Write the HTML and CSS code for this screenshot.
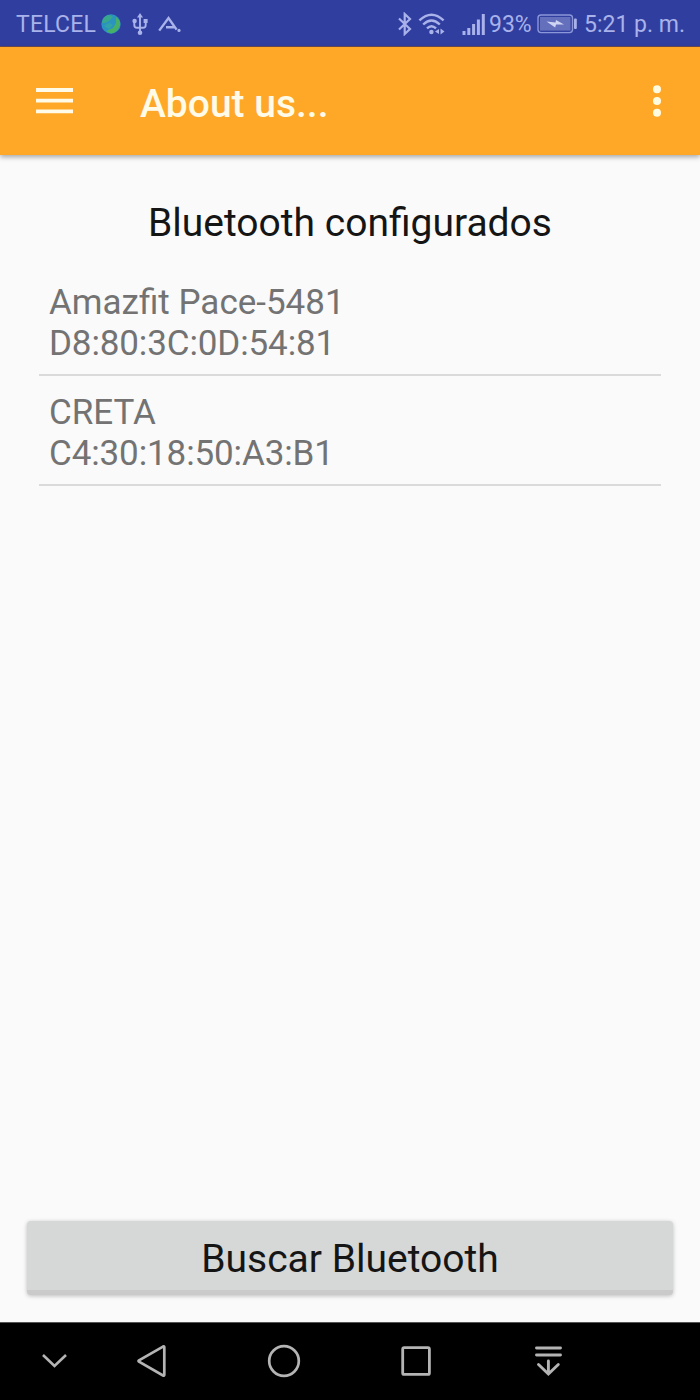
FILE: index.html
```html
<!DOCTYPE html>
<html lang="es">
<head>
    <meta charset="UTF-8">
    <title>Bluetooth configurados</title>
    <link rel="stylesheet" href="styles.css">
</head>
<body>
    <div class="screen">
        <div class="status-bar">
            <div class="status-left">
                <span class="carrier">TELCEL</span>
                <svg class="icon-globe" width="20" height="20" viewBox="0 0 20 20">
                    <circle cx="10" cy="10" r="9.7" fill="#2b93c0"/>
                    <path d="M1 9 Q2 1 9 1 L12 3 L8 7 L4 9 Z" fill="#38a88c"/>
                    <path d="M15 3 Q20 7 19 11 Q17 18 10 19.5 L5 17 L12 14 L15 9 Z" fill="#46b166"/>
                    <path d="M3 12 L8 9 L12 11 L8 15 Z" fill="#31a4a8"/>
                </svg>
                <svg class="icon-usb" width="16" height="24" viewBox="0 0 16 24">
                    <path d="M8 4V20M2.3 9V13Q2.3 15.8 5 15.8H11Q13.7 15.8 13.7 13V9" fill="none" stroke="#a9b2ea" stroke-width="1.9"/>
                    <path d="M5 5.5L8 1L11 5.5Z" fill="#a9b2ea"/>
                    <circle cx="8" cy="20.7" r="2.3" fill="#a9b2ea"/>
                    <circle cx="2.6" cy="9" r="2.2" fill="#a9b2ea"/>
                    <rect x="11.6" y="7" width="4" height="4" fill="#a9b2ea"/>
                </svg>
                <svg class="icon-app" width="24" height="20" viewBox="0 0 24 20">
                    <path d="M1.2 15.6L10.5 3L18.6 14.6M8 12.3H17" fill="none" stroke="#a9b2ea" stroke-width="2.4"/>
                    <circle cx="21" cy="15.4" r="1.6" fill="#a9b2ea"/>
                </svg>
            </div>
            <div class="status-right">
                <svg class="icon-bt" width="16" height="24" viewBox="0 0 16 24">
                    <path d="M2 6.5L13 17L7.7 22V2L13 7L2 17.5" fill="none" stroke="#a9b2ea" stroke-width="2.2"/>
                </svg>
                <svg class="icon-wifi" width="29" height="24" viewBox="0 0 29 24">
                    <path d="M1.4 8.3Q13.5 -3 25.6 8.3M5.2 12.5Q13.5 4.5 21.8 12.5M9 16.4Q13.5 12 18 16.4" fill="none" stroke="#a9b2ea" stroke-width="2.4"/>
                    <circle cx="13.4" cy="20" r="2.2" fill="#a9b2ea"/>
                    <path d="M17 19.5L21 17V22ZM26.5 19.5L22.5 16.5V22.5Z" fill="#a9b2ea"/>
                </svg>
                <svg class="icon-signal" width="24" height="24" viewBox="0 0 24 24">
                    <path d="M2 19V23M6.8 16V23M11.6 12V23M16.4 7.5V23M21.3 2V23" fill="none" stroke="#a9b2ea" stroke-width="3"/>
                </svg>
                <span class="percent">93%</span>
                <svg class="icon-battery" width="41" height="20" viewBox="0 0 41 20">
                    <rect x="1" y="1" width="34.5" height="17.6" rx="3" fill="none" stroke="#8c97d9" stroke-width="1.4"/>
                    <rect x="3" y="3" width="30.5" height="13.6" fill="#6470bc"/>
                    <path d="M9.5 7.5L18.5 8.6L19 6L27 10.6L19 10.6L18.2 13.5Z" fill="#d1d5f4"/>
                    <rect x="37" y="4.5" width="2.8" height="10.5" rx="1" fill="#a9b2ea"/>
                </svg>
                <span class="clock">5:21 p. m.</span>
            </div>
        </div>

        <div class="app-bar">
            <svg class="icon-menu" width="38" height="28" viewBox="0 0 38 28">
                <path d="M0 3H37M0 13.7H37M0 24.4H37" stroke="#fffbe8" stroke-width="3.8"/>
            </svg>
            <span class="app-title">About us...</span>
            <svg class="icon-more" width="10" height="34" viewBox="0 0 10 34">
                <circle cx="5" cy="5.2" r="4" fill="#fffbe0"/>
                <circle cx="5" cy="17" r="4" fill="#fffbe0"/>
                <circle cx="5" cy="28.7" r="4" fill="#fffbe0"/>
            </svg>
        </div>

        <div class="content">
            <h1>Bluetooth configurados</h1>
            <ul class="devices">
                <li><span>Amazfit Pace-5481</span><span class="address">D8:80:3C:0D:54:81</span></li>
                <li><span>CRETA</span><span class="address">C4:30:18:50:A3:B1</span></li>
            </ul>
            <button class="search">Buscar Bluetooth</button>
        </div>

        <div class="nav-bar">
            <svg width="132" height="40" viewBox="0 0 132 40">
                <path d="M43 15L54.5 26L66 15" fill="none" stroke="#b4b4b4" stroke-width="2.6"/>
            </svg>
            <svg width="80" height="40" viewBox="0 0 80 40">
                <path d="M7 20.3Q6 21 7 21.7L31 35.5Q32.3 36 32.3 34.8V7.3Q32.3 6 31 6.6Z" fill="none" stroke="#b4b4b4" stroke-width="2.7"/>
            </svg>
            <svg width="144" height="40" viewBox="0 0 144 40">
                <circle cx="72" cy="21" r="14.8" fill="none" stroke="#b4b4b4" stroke-width="2.7"/>
            </svg>
            <svg width="120" height="40" viewBox="0 0 120 40">
                <rect x="46.7" y="7.7" width="26.7" height="26.7" rx="1.5" fill="none" stroke="#b4b4b4" stroke-width="2.8"/>
            </svg>
            <svg width="144" height="40" viewBox="0 0 144 40">
                <path d="M60.5 8H84.5M60.5 15H84.5M72.4 21V34M62.5 24.5L72.4 34L82.3 24.5" fill="none" stroke="#b4b4b4" stroke-width="2.9" stroke-linecap="round"/>
            </svg>
        </div>
    </div>
</body>
</html>
```
FILE: styles.css
```css
* {
    box-sizing: border-box;
}
body {
    margin: 0;
    font-family: Roboto, sans-serif;
    background-color: #fafafa;
}
svg {
    display: block;
    flex-shrink: 0;
}
.screen {
    display: flex;
    flex-direction: column;
    width: 700px;
    height: 1400px;
    overflow: hidden;
}
.status-bar {
    display: flex;
    justify-content: space-between;
    height: 47px;
    padding: 0 15px 0 16px;
    background-color: #303f9f;
    border-bottom: 1px solid #6b4a55;
    color: #a9b2ea;
    font-size: 23px;
    line-height: 44px;
    white-space: nowrap;
}
.status-left, .status-right {
    display: flex;
    align-items: center;
}
.carrier, .percent, .clock {
    padding-top: 4px;
}
.carrier {
    width: 85px;
    letter-spacing: 0.2px;
}
.icon-globe {
    margin-top: 2px;
}
.icon-usb {
    margin: 2px 0 0 11px;
}
.icon-app {
    margin: 3px 0 0 10px;
}
.icon-bt {
    margin-top: 1px;
}
.icon-wifi {
    margin: 1px 0 0 5px;
}
.icon-signal {
    margin: 1px 0 0 15px;
}
.percent {
    width: 43px;
    margin-left: 3px;
}
.icon-battery {
    margin: 1px 0 0 5px;
}
.clock {
    width: 101px;
    margin-left: 6px;
}
.app-bar {
    display: flex;
    align-items: center;
    height: 108px;
    padding: 0 38px 0 36px;
    background-color: #ffa827;
    box-shadow: 0 2px 5px rgba(0,0,0,0.35);
    color: #fffbe8;
}
.icon-menu {
    margin-bottom: 1px;
}
.app-title {
    flex: 1;
    margin: 6px 0 0 66px;
    font-size: 39px;
    font-weight: 500;
}
.content {
    display: flex;
    flex: 1;
    flex-direction: column;
    padding: 45px 27px 27px;
}
h1 {
    margin: 0;
    color: #151515;
    font-size: 39px;
    font-weight: 400;
    line-height: 46px;
    text-align: center;
}
.devices {
    margin: 20px 12px 0;
    padding: 0;
    list-style: none;
}
.devices li {
    height: 110px;
    padding: 16px 10px 0;
    border-bottom: 2px solid #dadada;
    color: #737373;
    font-size: 35px;
    line-height: 41px;
}
.devices span {
    display: block;
}
.devices .address {
    letter-spacing: -0.12px;
}
.search {
    height: 74px;
    margin-top: auto;
    padding: 7px 0 0;
    background-color: #d6d7d7;
    border: none;
    border-bottom: 5px solid #cacaca;
    border-radius: 4px;
    box-shadow: 0 1px 4px rgba(0,0,0,0.25);
    color: #151515;
    font-family: inherit;
    font-size: 39px;
}
.nav-bar {
    display: flex;
    align-items: center;
    height: 78px;
    padding-bottom: 3px;
    background-color: #000;
    border-top: 1px solid #555;
}
```
